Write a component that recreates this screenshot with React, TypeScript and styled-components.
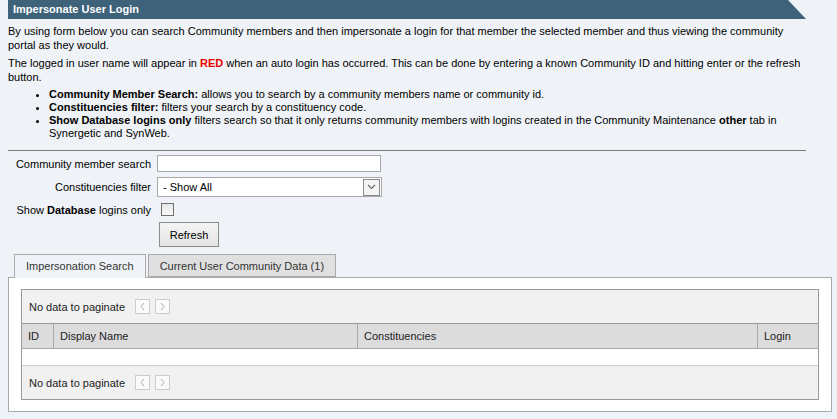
import * as React from 'react';
import styled, { createGlobalStyle } from 'styled-components';

const GlobalStyle = createGlobalStyle`
  html, body {
    margin: 0;
    padding: 0;
    background: #eff3f7;
  }
  body {
    font-family: "Liberation Sans", Arial, sans-serif;
    font-size: 11px;
    color: #000;
  }
`;

const Page = styled.div`
  padding: 0 6px 0 8px;
  height: 419px;
  overflow: hidden;
`;

const Intro = styled.div`
  width: 798px;
`;

const TitleBar = styled.div`
  height: 19px;
  line-height: 19px;
  padding-left: 5px;
  background: #3d6279;
  color: #fff;
  font-weight: bold;
  font-size: 11px;
  clip-path: polygon(0 0, 780px 0, 100% 100%, 0 100%);
`;

const Para = styled.p<{ $gap: number }>`
  margin: ${p => p.$gap}px 0 0;
  line-height: 14px;
`;

const Red = styled.span`
  color: #e00;
  font-weight: bold;
`;

const Bullets = styled.ul`
  margin: 4px 0 0;
  padding-left: 41px;
  line-height: 13px;
  list-style: disc;
`;

const Rule = styled.hr`
  margin: 10px 0 0;
  border: none;
  border-top: 1px solid #7a7a7a;
  height: 0;
`;

const Form = styled.div`
  display: grid;
  grid-template-columns: 143px auto;
  grid-template-rows: 17px 20px 15px 25px;
  column-gap: 6px;
  row-gap: 5px;
  margin-top: 4px;
  align-items: center;
  justify-items: start;
`;

const Label = styled.label`
  justify-self: end;
  white-space: nowrap;
`;

const TextInput = styled.input`
  box-sizing: border-box;
  width: 224px;
  height: 17px;
  border: 1px solid #a9a9a9;
  background: #fff;
  padding: 0 4px;
  font: inherit;
`;

const SelectBox = styled.div`
  box-sizing: border-box;
  display: flex;
  align-items: center;
  width: 225px;
  height: 20px;
  border: 1px solid #a9a9a9;
  background: #fff;
`;

const Select = styled.select`
  flex: 1;
  height: 100%;
  border: none;
  background: transparent;
  appearance: none;
  font: inherit;
  padding: 0 5px;
  outline: none;
`;

const ArrowBox = styled.div`
  box-sizing: border-box;
  width: 17px;
  height: 17px;
  margin-right: 1px;
  border: 1px solid #8a8a8a;
  background: #f4f4f4;
  display: flex;
  align-items: center;
  justify-content: center;
`;

const Check = styled.input`
  appearance: none;
  box-sizing: border-box;
  width: 13px;
  height: 13px;
  margin: 0 0 0 4px;
  border: 1px solid #707070;
  background: linear-gradient(#e6e6e6, #fafafa);
`;

const Button = styled.button`
  box-sizing: border-box;
  width: 60px;
  height: 25px;
  margin-left: 2px;
  border: 1px solid #8c8c8c;
  border-radius: 0;
  background: linear-gradient(#f5f5f5, #e3e3e3);
  font: inherit;
  color: #000;
`;

const Tabs = styled.div`
  display: flex;
  gap: 2px;
  margin: 7px 0 0 6px;
  position: relative;
  z-index: 1;
`;

const Tab = styled.div<{ $active?: boolean }>`
  box-sizing: border-box;
  height: ${p => (p.$active ? 24 : 23)}px;
  padding: 0 11px;
  line-height: 22px;
  border: 1px solid #aaa;
  border-bottom: ${p => (p.$active ? 'none' : '1px solid #aaa')};
  background: ${p => (p.$active ? '#eff3f7' : '#e0e0e0')};
  color: #333;
`;

const Panel = styled.div`
  box-sizing: border-box;
  width: 824px;
  margin-top: -1px;
  padding: 11px 12px;
  border: 1px solid #aaa;
  background: #fff;
`;

const Grid = styled.div`
  border: 1px solid #999;
`;

const Pager = styled.div<{ $top?: boolean }>`
  display: flex;
  align-items: center;
  height: ${p => (p.$top ? 33 : 33)}px;
  padding-left: 7px;
  background: #f1f1f1;
  border-top: ${p => (p.$top ? 'none' : '1px solid #ccc')};
  border-bottom: ${p => (p.$top ? '1px solid #999' : 'none')};
  color: #222;
`;

const PagerButtons = styled.div`
  display: flex;
  gap: 5px;
  margin-left: 10px;
`;

const PageBtn = styled.div`
  box-sizing: border-box;
  width: 15px;
  height: 15px;
  border: 1px solid #ccc;
  background: #fafafa;
  display: flex;
  align-items: center;
  justify-content: center;
`;

const HeadRow = styled.div`
  display: grid;
  grid-template-columns: 31px 304px 400px 1fr;
  height: 24px;
  background: #dcdcdc;
  border-bottom: 1px solid #aaa;
`;

const HeadCell = styled.div`
  display: flex;
  align-items: center;
  padding-left: 6px;
  border-left: 1px solid #aaa;
  color: #222;
  &:first-child {
    border-left: none;
    padding-left: 6px;
  }
`;

const EmptyBody = styled.div`
  height: 16px;
  background: #fff;
`;

const Chevron = ({ dir }: { dir: 'left' | 'right' }) => (
  <svg width="7" height="9" viewBox="0 0 7 9">
    <path
      d={dir === 'left' ? 'M5 1 L2 4.5 L5 8' : 'M2 1 L5 4.5 L2 8'}
      fill="none"
      stroke="#a8a8a8"
      strokeWidth="1"
    />
  </svg>
);

const PagerBar = ({ top }: { top?: boolean }) => (
  <Pager $top={top}>
    No data to paginate
    <PagerButtons>
      <PageBtn><Chevron dir="left" /></PageBtn>
      <PageBtn><Chevron dir="right" /></PageBtn>
    </PagerButtons>
  </Pager>
);

export default function App() {
  return (
    <Page>
      <GlobalStyle />
      <Intro>
        <TitleBar>Impersonate User Login</TitleBar>
        <Para $gap={5}>
          By using form below you can search Community members and then impersonate a login for that member the selected member and thus viewing the community portal as they would.
        </Para>
        <Para $gap={4}>
          The logged in user name will appear in <Red>RED</Red> when an auto login has occurred. This can be done by entering a known Community ID and hitting enter or the refresh button.
        </Para>
        <Bullets>
          <li><b>Community Member Search:</b> allows you to search by a community members name or community id.</li>
          <li><b>Constituencies filter:</b> filters your search by a constituency code.</li>
          <li><b>Show Database logins only</b> filters search so that it only returns community members with logins created in the Community Maintenance <b>other</b> tab in Synergetic and SynWeb.</li>
        </Bullets>
        <Rule />
      </Intro>

      <Form>
        <Label>Community member search</Label>
        <TextInput type="text" />
        <Label>Constituencies filter</Label>
        <SelectBox>
          <Select defaultValue="all">
            <option value="all">- Show All</option>
          </Select>
          <ArrowBox>
            <svg width="9" height="6" viewBox="0 0 9 6">
              <path d="M1 1 L4.5 4.5 L8 1" fill="none" stroke="#666" strokeWidth="1.2" />
            </svg>
          </ArrowBox>
        </SelectBox>
        <Label>Show <b>Database</b> logins only</Label>
        <Check type="checkbox" />
        <span />
        <Button>Refresh</Button>
      </Form>

      <Tabs>
        <Tab $active>Impersonation Search</Tab>
        <Tab>Current User Community Data (1)</Tab>
      </Tabs>
      <Panel>
        <Grid>
          <PagerBar top />
          <HeadRow>
            <HeadCell>ID</HeadCell>
            <HeadCell>Display Name</HeadCell>
            <HeadCell>Constituencies</HeadCell>
            <HeadCell>Login</HeadCell>
          </HeadRow>
          <EmptyBody />
          <PagerBar />
        </Grid>
      </Panel>
    </Page>
  );
}
